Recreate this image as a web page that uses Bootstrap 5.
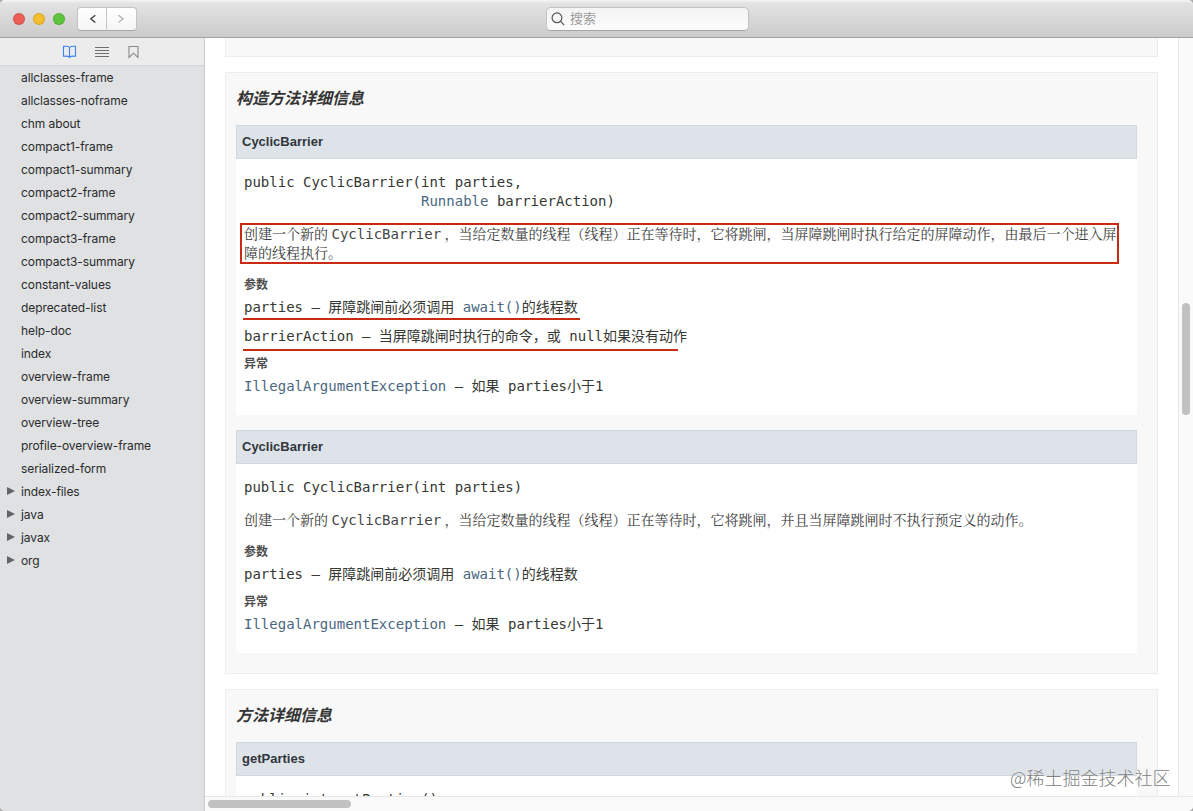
<!DOCTYPE html>
<html lang="zh-CN">
<head>
<meta charset="utf-8">
<meta name="viewport" content="width=device-width, initial-scale=1">
<title>CyclicBarrier</title>
<link rel="stylesheet" href="https://cdn.jsdelivr.net/npm/bootstrap@5.3.0/dist/css/bootstrap.min.css">
<style>
  html, body { height: 100%; }
  body { margin: 0; overflow: hidden; background: #a9a9a9; font-family: Inter, "Noto Sans CJK SC", sans-serif; }
  .window { height: 811px; border-radius: 5px; background: #fff; }
  .titlebar { height: 38px; padding-left: 13px; background: linear-gradient(#f4f4f4 0, #f0f0f0 1px, #e3e3e3 3px, #cbcbcb 100%); border-bottom: 1px solid #a2a2a2; }
  .light { width: 12px; height: 12px; border-radius: 50%; margin-right: 8px; border: .5px solid rgba(0,0,0,.12); }
  .navbtn { width: 30px; height: 24px; background: linear-gradient(#fff, #f5f5f5); border: 1px solid #c4c4c4; border-bottom-color: #a9a9a9; }
  .navbtn:first-child { border-radius: 4px 0 0 4px; }
  .navbtn:last-child { border-radius: 0 4px 4px 0; border-left: 0; }
  .search { left: 546px; top: 7px; width: 203px; height: 24px; border-radius: 5px; background: linear-gradient(#f4f4f4, #fbfbfb); border: 1px solid #c2c2c2; border-bottom-color: #a5a5a5; font-size: 13px; color: #9c9c9c; padding-left: 4px; }
  .sidebar { width: 205px; background: #dfe1e3; border-right: 1px solid #c9cbcc; }
  .tabs { height: 28px; background: #ececec; border-bottom: 1px solid #d3d5d6; }
  .tree { font-size: 12px; color: #2a2b2c; line-height: 23px; letter-spacing: -.08px; }
  .tree li { padding-left: 21px; height: 23px; position: relative; white-space: nowrap; }
  .tree .folder::before { content: ""; position: absolute; left: 7px; top: 7px; border-left: 8px solid #636466; border-top: 4.5px solid transparent; border-bottom: 4.5px solid transparent; }
  .doc { padding: 0 20px; }
  .panel { flex: none; background: #f8f8f8; border: 1px solid #ededed; padding: 0 20px 0 10px; }
  .panel h3 { font: italic bold 16px/24px "Noto Sans CJK SC", sans-serif; color: #343434; margin: 12px 0 16px; }
  .member h4 { height: 34px; margin: 0; padding-left: 5px; font: bold 13px/32px "Liberation Sans", sans-serif; color: #30363b; background: #dee3e9; border: 1px solid #d0d9e0; }
  .detail { background: #fff; padding: 14px 8px 0; font-family: "DejaVu Sans Mono", "Noto Sans CJK SC", monospace; font-size: 14px; line-height: 20px; color: #353833; white-space: nowrap; }
  .detail pre { font: inherit; line-height: 19px; margin: 0; overflow: visible; }
  .detail a { color: #4a6782; text-decoration: none; }
  .prose { font-family: "Liberation Serif", "Songti SC", "Noto Serif CJK SC", "Noto Sans CJK SC", serif; line-height: 19px; color: #3c3c3c; margin: 14px 0 13px; }
  .prose code { font: inherit; font-family: "DejaVu Sans Mono", monospace; color: #474747; }
  .boxed { border: 2px solid #c92a12; width: 879px; height: 41px; margin: 12px 0 12px -4px; padding-left: 2px; }
  .term { font: bold 12px/16px "Noto Sans CJK SC", sans-serif; color: #4e4e4e; }
  .marked { position: relative; }
  .marked::after { content: ""; position: absolute; left: -1px; height: 2px; background: #c92a12; }
  .m1::after { top: 21px; width: 337px; }
  .m2::after { top: 23px; width: 435px; }
  .vbar { width: 15px; background: #fafafa; border-left: 1px solid #e7e7e7; }
  .hbar { height: 15px; background: #fafafa; border-top: 1px solid #e7e7e7; }
  .thumb { background: #c1c1c1; border-radius: 4px; }
  .watermark { left: 1010px; top: 763px; font: 300 18px/28px "Noto Sans CJK SC", sans-serif; color: #808080; text-shadow: 0 0 1px #fff; white-space: nowrap; }
</style>
<script src="https://cdn.jsdelivr.net/npm/bootstrap@5.3.0/dist/js/bootstrap.bundle.min.js"></script>
</head>
<body>
<div class="window d-flex flex-column overflow-hidden position-relative">
  <header class="titlebar d-flex align-items-center flex-shrink-0">
    <span class="light" style="background:#ec5f57"></span>
    <span class="light" style="background:#f5be2e"></span>
    <span class="light" style="background:#5ec43c"></span>
    <div class="d-flex" style="margin-left:4px">
      <span class="navbtn d-flex align-items-center justify-content-center"><svg style="margin-left:2px" width="8" height="10" viewBox="0 0 8 10" fill="none" stroke="#3c3c3c" stroke-width="1.3"><path d="M6.300 1.200 1.800 4.800l4.500 3.600"/></svg></span>
      <span class="navbtn d-flex align-items-center justify-content-center"><svg style="margin-right:2px" width="8" height="10" viewBox="0 0 8 10" fill="none" stroke="#adadad" stroke-width="1.2"><path d="M1.500 1.200 6 4.800 1.500 8.400"/></svg></span>
    </div>
    <div class="search position-absolute d-flex align-items-center">
      <svg class="me-1" width="14" height="14" viewBox="0 0 14 14" fill="none" stroke="#555" stroke-width="1.200"><circle cx="6" cy="5.800" r="4.900"/><path d="m9.400 9.200 3.800 3.900"/></svg>
      <span style="margin-left:1px">搜索</span>
    </div>
  </header>

  <div class="d-flex flex-grow-1 overflow-hidden">
    <aside class="sidebar flex-shrink-0">
      <div class="tabs d-flex align-items-center">
        <svg width="204" height="27" viewBox="0 0 204 27" fill="none">
          <path d="M69.500 9.500c-1.200-1.300-3.500-1.500-6-1.100v9.900c2.300-.4 4.700-.2 6 1.100 1.300-1.300 3.700-1.500 6-1.100V8.400c-2.300-.4-4.800-.2-6 1.100zv9.500" stroke="#3b83f0" stroke-width="1.100"/>
          <path d="M95 9.500h14M95 12.500h14M95 15.500h14M95 18.500h14" stroke="#6e6e6e"/>
          <path d="M129 8.500h9v11l-4.500-4.300-4.500 4.300z" stroke="#8a8a8a" stroke-width="1.100"/>
        </svg>
      </div>
      <ul class="tree list-unstyled m-0">
        <li>allclasses-frame</li><li>allclasses-noframe</li><li>chm about</li><li>compact1-frame</li><li>compact1-summary</li><li>compact2-frame</li><li>compact2-summary</li><li>compact3-frame</li><li>compact3-summary</li><li>constant-values</li><li>deprecated-list</li><li>help-doc</li><li>index</li><li>overview-frame</li><li>overview-summary</li><li>overview-tree</li><li>profile-overview-frame</li><li>serialized-form</li>
        <li class="folder">index-files</li><li class="folder">java</li><li class="folder">javax</li><li class="folder">org</li>
      </ul>
    </aside>

    <div class="d-flex flex-column flex-grow-1 overflow-hidden">
      <div class="d-flex flex-grow-1 overflow-hidden">
        <main class="doc d-flex flex-column flex-grow-1 overflow-hidden">
          <section class="panel border-top-0" style="height:19px;margin-bottom:15px"></section>

          <section class="panel" style="height:602px;margin-bottom:15px">
            <h3>构造方法详细信息</h3>
            <article class="member">
              <h4>CyclicBarrier</h4>
              <div class="detail" style="height:256px">
                <pre>public CyclicBarrier(int parties,
                     <a href="#">Runnable</a> barrierAction)</pre>
                <p class="prose boxed">创建一个新的 <code>CyclicBarrier</code> ，当给定数量的线程（线程）正在等待时，它将跳闸，当屏障跳闸时执行给定的屏障动作，由最后一个进入屏<br>障的线程执行。</p>
                <div class="term">参数</div>
                <div class="marked m1" style="margin-top:5px">parties – 屏障跳闸前必须调用 <a href="#">await()</a>的线程数</div>
                <div class="marked m2" style="margin-top:9px">barrierAction – 当屏障跳闸时执行的命令，或 null如果没有动作</div>
                <div class="term" style="margin-top:9px">异常</div>
                <div style="margin-top:5px"><a href="#">IllegalArgumentException</a> – 如果 parties小于1</div>
              </div>
            </article>
            <article class="member" style="margin-top:15px">
              <h4>CyclicBarrier</h4>
              <div class="detail" style="height:189px">
                <pre>public CyclicBarrier(int parties)</pre>
                <p class="prose">创建一个新的 <code>CyclicBarrier</code> ，当给定数量的线程（线程）正在等待时，它将跳闸，并且当屏障跳闸时不执行预定义的动作。</p>
                <div class="term">参数</div>
                <div style="margin-top:5px">parties – 屏障跳闸前必须调用 <a href="#">await()</a>的线程数</div>
                <div class="term" style="margin-top:9px">异常</div>
                <div style="margin-top:5px"><a href="#">IllegalArgumentException</a> – 如果 parties小于1</div>
              </div>
            </article>
          </section>

          <section class="panel" style="height:200px">
            <h3>方法详细信息</h3>
            <article class="member">
              <h4>getParties</h4>
              <div class="detail" style="height:120px"><pre>public int getParties()</pre></div>
            </article>
          </section>
        </main>
        <div class="vbar flex-shrink-0"><div class="thumb" style="width:8px;height:112px;margin:265px 0 0 3px"></div></div>
      </div>
      <div class="hbar flex-shrink-0"><div class="thumb" style="width:143px;height:8px;margin:3px 0 0 3px"></div></div>
    </div>
  </div>
  <div class="watermark position-absolute">@稀土掘金技术社区</div>
</div>
</body>
</html>
